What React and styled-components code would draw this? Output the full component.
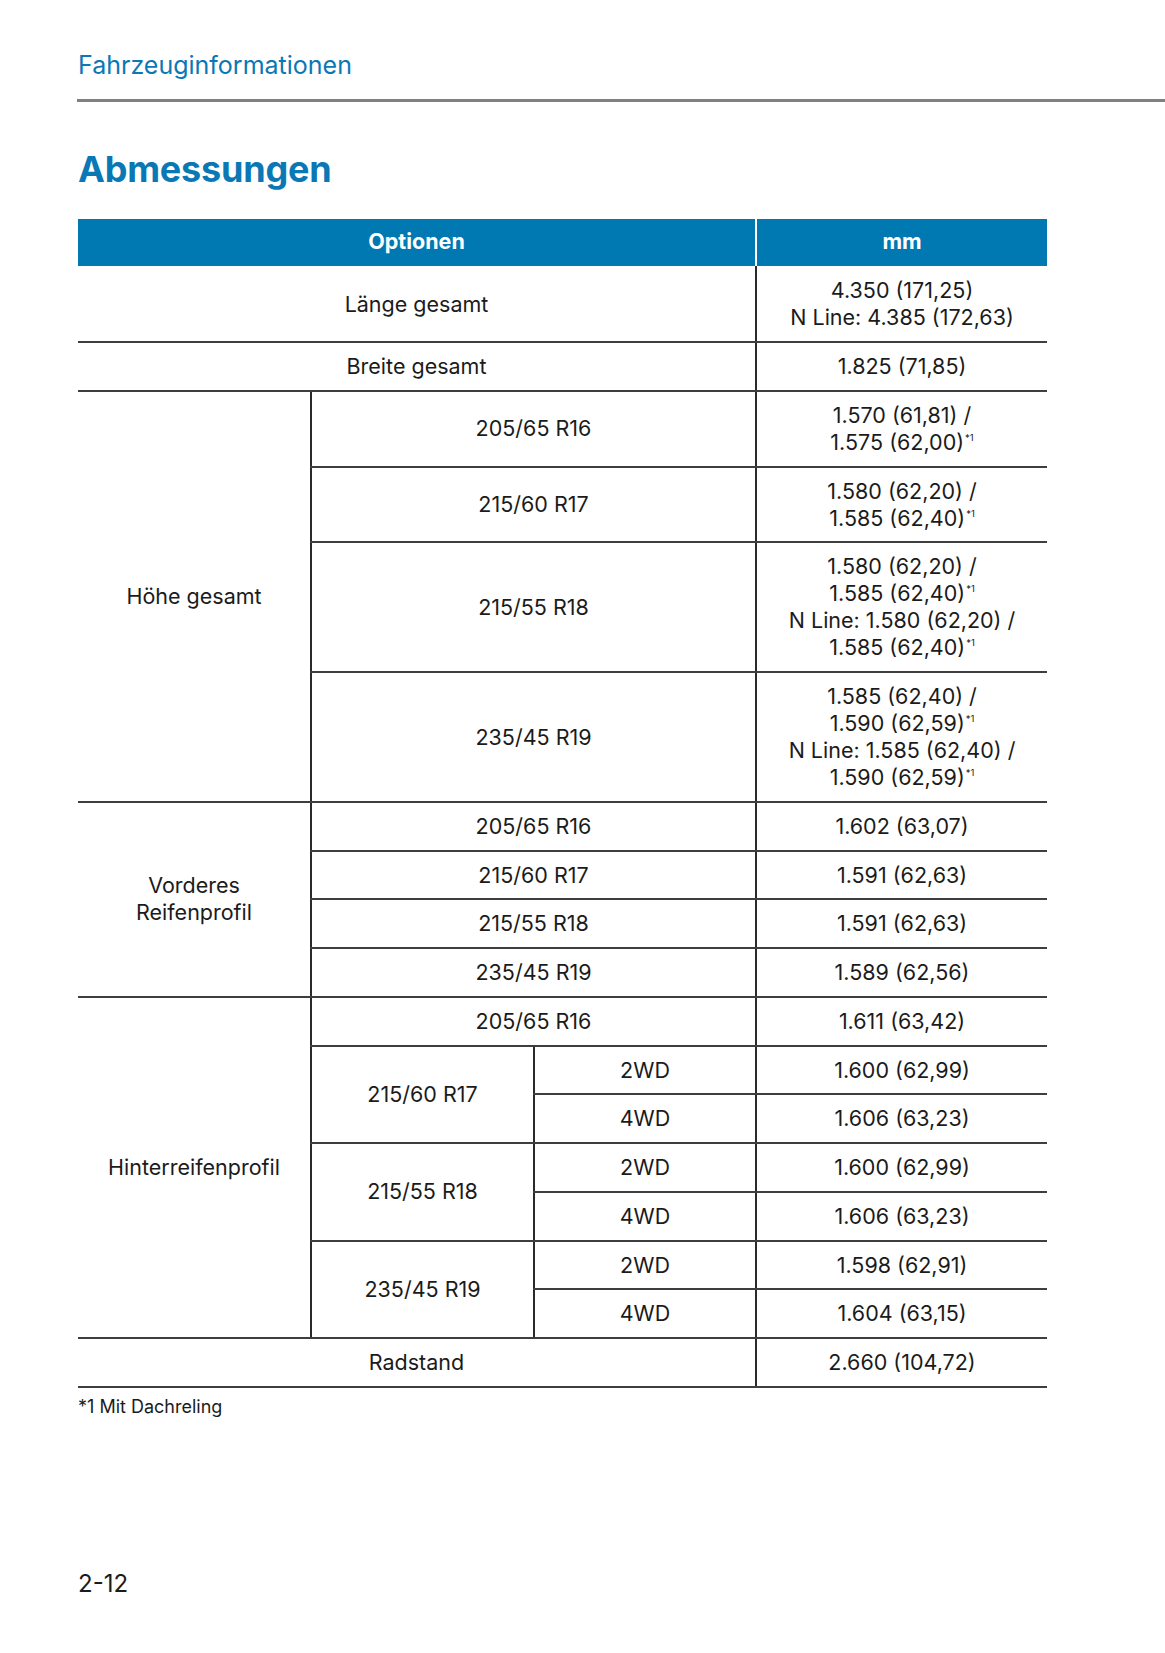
import React from 'react';
import styled, { createGlobalStyle } from 'styled-components';

const GlobalStyle = createGlobalStyle`
  body {
    margin: 0;
    background: #ffffff;
    font-family: Inter, "Liberation Sans", Arial, sans-serif;
    color: #1b1b1b;
  }
`;

const Page = styled.div`
  width: 1165px;
  min-height: 1653px;
  padding-left: 78px;
  box-sizing: border-box;
`;

const RunningHead = styled.div`
  padding-top: 50px;
  font-size: 25px;
  line-height: 30px;
  color: #0a78b4;
`;

const Rule = styled.div`
  margin: 19px 0 0 -1px;
  height: 3px;
  background: #808080;
`;

const Title = styled.h1`
  margin: 46px 0 0;
  font-size: 36px;
  line-height: 42px;
  font-weight: 700;
  color: #0a78b4;
  letter-spacing: -0.2px;
`;

const Table = styled.table`
  margin-top: 29px;
  width: 969px;
  table-layout: fixed;
  border-collapse: collapse;
  font-size: 21.5px;
`;

const HeadCell = styled.th`
  background: #0079b3;
  color: #ffffff;
  font-weight: 700;
  line-height: 28px;
  padding: 8px 8px 11px;
  border-right: ${p => (p.$divider ? '2px solid #ffffff' : 'none')};
`;

const Cell = styled.td`
  text-align: center;
  vertical-align: middle;
  line-height: 27px;
  padding: ${p => (p.$tall ? '11px 8px 10px' : '10px 8px 9.75px')};
  border-bottom: 2px solid #3e3e3e;
  border-left: ${p => (p.$left ? '2px solid #2a2a2a' : 'none')};
`;

const Sup = styled.sup`
  font-size: 9.5px;
  line-height: 0;
  vertical-align: 9px;
  margin-left: 1px;
`;

const Footnote = styled.div`
  margin-top: 8px;
  font-size: 18px;
  line-height: 22px;
`;

const PageNumber = styled.div`
  margin-top: 151px;
  font-size: 24px;
  line-height: 30px;
`;

const Star = () => <Sup>*1</Sup>;

const heightRows = [
  {
    tire: '205/65 R16',
    value: <>1.570 (61,81) /<br />1.575 (62,00)<Star /></>,
  },
  {
    tire: '215/60 R17',
    value: <>1.580 (62,20) /<br />1.585 (62,40)<Star /></>,
  },
  {
    tire: '215/55 R18',
    value: (
      <>
        1.580 (62,20) /<br />1.585 (62,40)<Star /><br />
        N Line: 1.580 (62,20) /<br />1.585 (62,40)<Star />
      </>
    ),
  },
  {
    tire: '235/45 R19',
    value: (
      <>
        1.585 (62,40) /<br />1.590 (62,59)<Star /><br />
        N Line: 1.585 (62,40) /<br />1.590 (62,59)<Star />
      </>
    ),
  },
];

const frontRows = [
  { tire: '205/65 R16', value: '1.602 (63,07)' },
  { tire: '215/60 R17', value: '1.591 (62,63)' },
  { tire: '215/55 R18', value: '1.591 (62,63)' },
  { tire: '235/45 R19', value: '1.589 (62,56)' },
];

const rearGroups = [
  { tire: '215/60 R17', wd2: '1.600 (62,99)', wd4: '1.606 (63,23)' },
  { tire: '215/55 R18', wd2: '1.600 (62,99)', wd4: '1.606 (63,23)' },
  { tire: '235/45 R19', wd2: '1.598 (62,91)', wd4: '1.604 (63,15)' },
];

const App = () => (
  <Page>
    <GlobalStyle />
    <RunningHead>Fahrzeuginformationen</RunningHead>
    <Rule />
    <Title>Abmessungen</Title>
    <Table>
      <colgroup>
        <col style={{ width: 233 }} />
        <col style={{ width: 223 }} />
        <col style={{ width: 222 }} />
        <col style={{ width: 291 }} />
      </colgroup>
      <thead>
        <tr>
          <HeadCell colSpan={3} $divider>Optionen</HeadCell>
          <HeadCell>mm</HeadCell>
        </tr>
      </thead>
      <tbody>
        <tr>
          <Cell colSpan={3} $tall>Länge gesamt</Cell>
          <Cell $left $tall>4.350 (171,25)<br />N Line: 4.385 (172,63)</Cell>
        </tr>
        <tr>
          <Cell colSpan={3}>Breite gesamt</Cell>
          <Cell $left>1.825 (71,85)</Cell>
        </tr>
        {heightRows.map((r, i) => (
          <tr key={r.tire}>
            {i === 0 && <Cell rowSpan={4}>Höhe gesamt</Cell>}
            <Cell colSpan={2} $left>{r.tire}</Cell>
            <Cell $left>{r.value}</Cell>
          </tr>
        ))}
        {frontRows.map((r, i) => (
          <tr key={r.tire}>
            {i === 0 && <Cell rowSpan={4}>Vorderes<br />Reifenprofil</Cell>}
            <Cell colSpan={2} $left>{r.tire}</Cell>
            <Cell $left>{r.value}</Cell>
          </tr>
        ))}
        <tr>
          <Cell rowSpan={7}>Hinterreifenprofil</Cell>
          <Cell colSpan={2} $left>205/65 R16</Cell>
          <Cell $left>1.611 (63,42)</Cell>
        </tr>
        {rearGroups.map(g => (
          <React.Fragment key={g.tire}>
            <tr>
              <Cell rowSpan={2} $left>{g.tire}</Cell>
              <Cell $left>2WD</Cell>
              <Cell $left>{g.wd2}</Cell>
            </tr>
            <tr>
              <Cell $left>4WD</Cell>
              <Cell $left>{g.wd4}</Cell>
            </tr>
          </React.Fragment>
        ))}
        <tr>
          <Cell colSpan={3}>Radstand</Cell>
          <Cell $left>2.660 (104,72)</Cell>
        </tr>
      </tbody>
    </Table>
    <Footnote>*1 Mit Dachreling</Footnote>
    <PageNumber>2-12</PageNumber>
  </Page>
);

export default App;
